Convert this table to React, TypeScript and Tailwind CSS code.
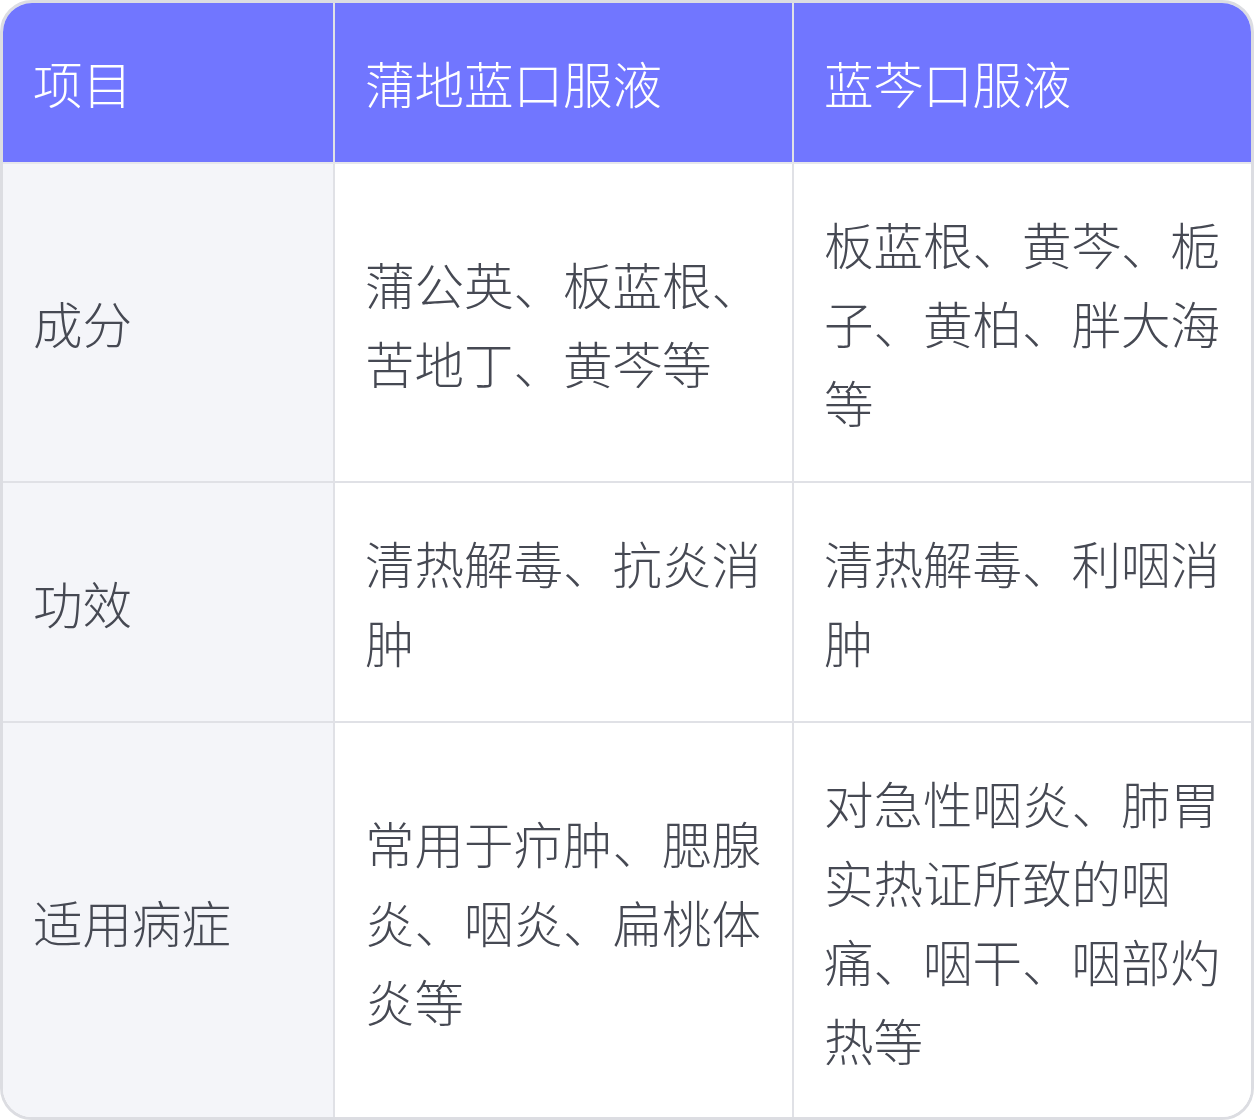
const headers = ["项目", "蒲地蓝口服液", "蓝芩口服液"];

const rows = [
  ["成分", "蒲公英、板蓝根、苦地丁、黄芩等", "板蓝根、黄芩、栀子、黄柏、胖大海等"],
  ["功效", "清热解毒、抗炎消肿", "清热解毒、利咽消肿"],
  ["适用病症", "常用于疖肿、腮腺炎、咽炎、扁桃体炎等", "对急性咽炎、肺胃实热证所致的咽痛、咽干、咽部灼热等"],
];

export default function App() {
  return (
    <div className="w-[1254px] h-[1120px] bg-white">
      <div className="h-full overflow-hidden rounded-[32px] border-[3px] border-[#dcdde2] bg-white font-['Noto_Sans_CJK_SC','Noto_Sans',sans-serif] font-light">
        <table className="h-full w-full table-fixed border-separate border-spacing-0 text-[49.5px] leading-[79px]">
          <colgroup>
            <col className="w-[332px]" />
            <col className="w-[459px]" />
            <col />
          </colgroup>
          <thead>
            <tr className="h-[161px]">
              {headers.map((h, i) => (
                <th
                  key={h}
                  className={
                    "bg-[#7176ff] px-[30px] py-[40px] text-left align-middle font-light text-white border-b-[2px] border-[#e6e7ec] " +
                    (i < 2 ? "border-r-[2px] border-r-[#e0e1e6]" : "")
                  }
                >
                  {h}
                </th>
              ))}
            </tr>
          </thead>
          <tbody>
            {rows.map((r, ri) => (
              <tr key={r[0]}>
                {r.map((c, ci) => (
                  <td
                    key={ci}
                    className={
                      "px-[30px] py-[40px] align-middle text-[#464953] border-[#e0e1e6] " +
                      (ci === 0 ? "bg-[#f4f5f9] " : "bg-white ") +
                      (ci < 2 ? "border-r-[2px] " : "") +
                      (ri < rows.length - 1 ? "border-b-[2px]" : "")
                    }
                  >
                    {c}
                  </td>
                ))}
              </tr>
            ))}
          </tbody>
        </table>
      </div>
    </div>
  );
}
